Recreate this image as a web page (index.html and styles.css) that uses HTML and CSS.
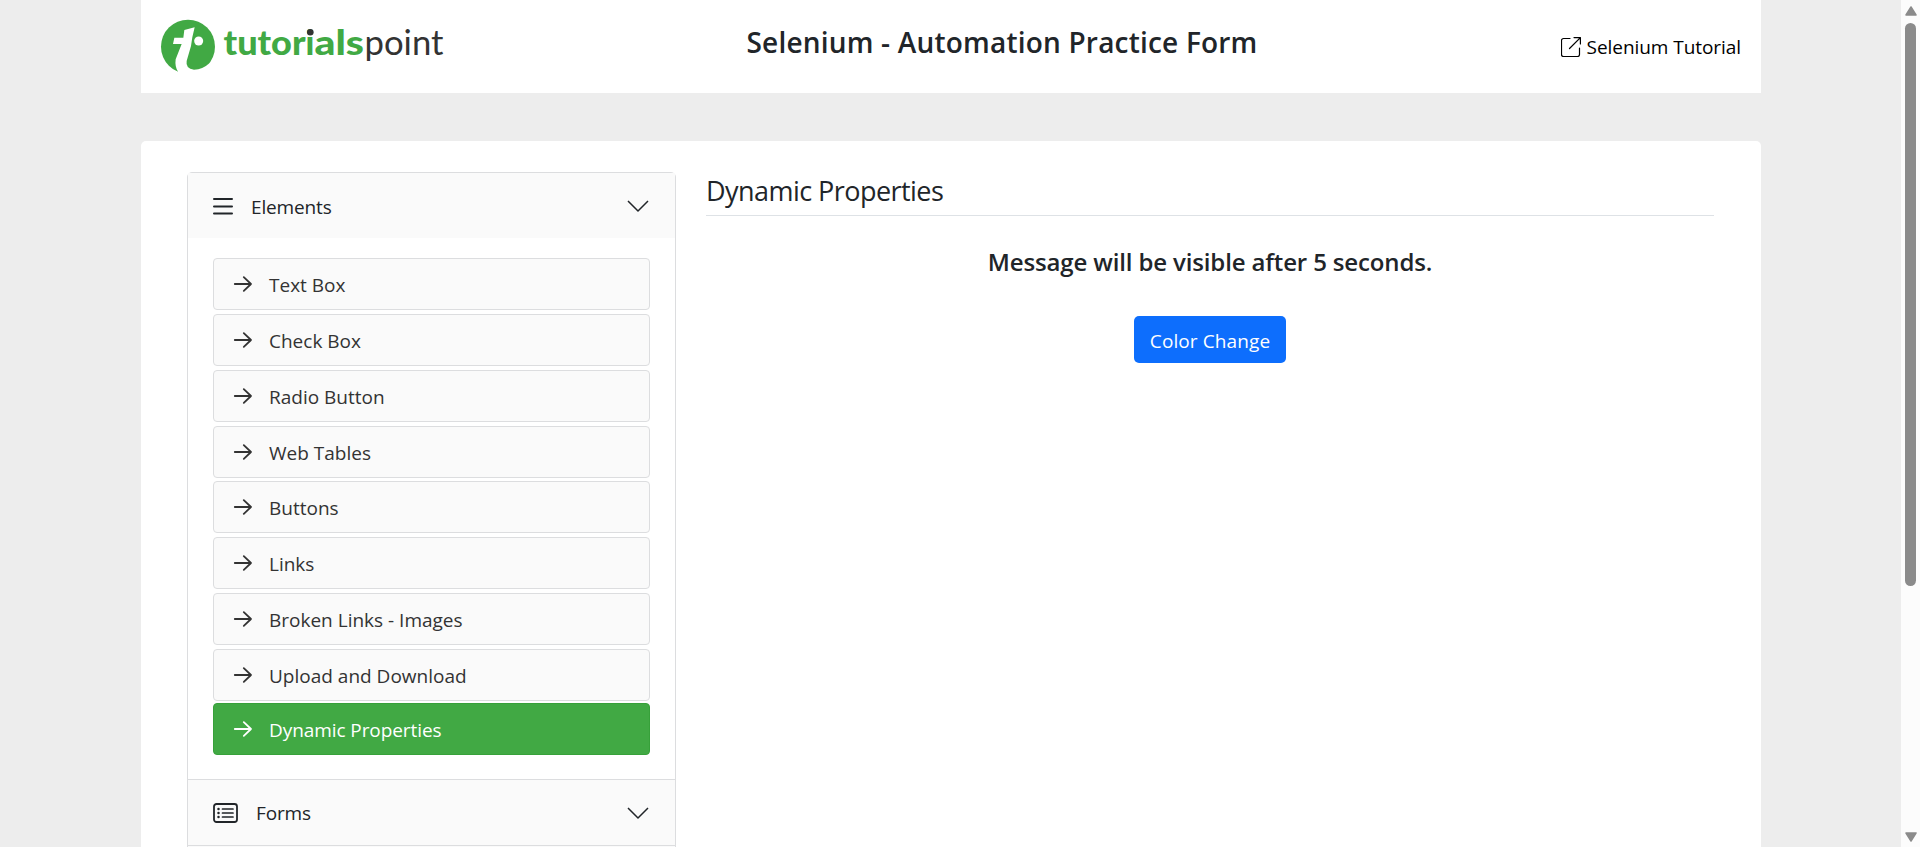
FILE: index.html
```html
<!DOCTYPE html>
<html lang="en">
<head>
<meta charset="utf-8">
<title>Selenium Practice - Dynamic Properties</title>
<link rel="stylesheet" href="styles.css">
</head>
<body>
<svg class="sprite" aria-hidden="true">
  <symbol id="arrow" viewBox="0 0 20 20"><path d="M1.800 10H18M10.800 3.200 18 10l-7.200 6.800" fill="none" stroke="currentColor" stroke-width="1.800" stroke-linecap="round" stroke-linejoin="round"/></symbol>
  <symbol id="chevron" viewBox="0 0 22 12"><path d="M1 1l10 10L21 1" fill="none" stroke="currentColor" stroke-width="1.500" stroke-linejoin="round"/></symbol>
</svg>
<div class="viewport">
  <div class="page">
    <header class="header">
      <svg class="logo" viewBox="0 0 290 60" role="img" aria-label="tutorialspoint">
        <g transform="translate(-3 -3) scale(.3333)">
          <circle cx="90" cy="92" r="81" fill="#41a944"/>
          <path d="M79 42 110 34 103 64 99 90 86 135Q82 158 108 161 135 160 152 143L150 190H62L60 167Q50 152 53 130L71 84H45L49 65H76Z" fill="#fff"/>
          <circle cx="122" cy="75" r="13.500" fill="#fff"/>
        </g>
        <text class="logo-bold" y="35.700"><tspan x="62.500" textLength="82" lengthAdjust="spacingAndGlyphs">tutor</tspan><tspan x="144.500">i</tspan><tspan x="153.500" textLength="49.500" lengthAdjust="spacingAndGlyphs">als</tspan></text>
        <circle cx="149.300" cy="13.200" r="3.300" fill="#333"/>
        <text class="logo-light" x="203.500" y="35.700" textLength="79" lengthAdjust="spacingAndGlyphs">point</text>
      </svg>
      <h1 class="title"><span>Selenium - Automation Practice Form</span></h1>
      <a class="tutorial"><svg class="external" viewBox="0 0 20 20"><path d="M9 1.500H2.500a2 2 0 0 0-2 2V17.500a2 2 0 0 0 2 2H16.500a2 2 0 0 0 2-2V11M13 .6H19.400V7M19.400.6 8.500 11.500" fill="none" stroke="#000" stroke-width="1.200" stroke-linecap="round" stroke-linejoin="round"/></svg><span>Selenium Tutorial</span></a>
    </header>
    <main class="card">
      <nav class="accordion">
        <div class="section-head">
          <svg class="icon-list" viewBox="0 0 20 18"><path d="M1 2H19M1 9.500H19M1 16.500H19" stroke="currentColor" stroke-width="2" stroke-linecap="round"/></svg>
          <span>Elements</span><svg class="chevron"><use href="#chevron"/></svg>
        </div>
        <ul class="links">
          <li class="link"><svg class="arrow"><use href="#arrow"/></svg><span>Text Box</span></li>
          <li class="link"><svg class="arrow"><use href="#arrow"/></svg><span>Check Box</span></li>
          <li class="link"><svg class="arrow"><use href="#arrow"/></svg><span>Radio Button</span></li>
          <li class="link"><svg class="arrow"><use href="#arrow"/></svg><span>Web Tables</span></li>
          <li class="link"><svg class="arrow"><use href="#arrow"/></svg><span>Buttons</span></li>
          <li class="link"><svg class="arrow"><use href="#arrow"/></svg><span>Links</span></li>
          <li class="link"><svg class="arrow"><use href="#arrow"/></svg><span>Broken Links - Images</span></li>
          <li class="link"><svg class="arrow"><use href="#arrow"/></svg><span>Upload and Download</span></li>
          <li class="link active"><svg class="arrow"><use href="#arrow"/></svg><span>Dynamic Properties</span></li>
        </ul>
        <div class="section-head bordered">
          <svg class="icon-form" viewBox="0 0 25 20"><rect x="1" y="1" width="23" height="18" rx="2.500" fill="none" stroke="currentColor" stroke-width="1.800"/><path d="M9.500 6H20M9.500 10H20M9.500 14H20" stroke="currentColor" stroke-width="1.700" stroke-linecap="round"/><path d="M5.500 6h.01M5.500 10h.01M5.500 14h.01" stroke="currentColor" stroke-width="2.500" stroke-linecap="round"/></svg>
          <span>Forms</span><svg class="chevron"><use href="#chevron"/></svg>
        </div>
        <div class="section-head bordered"></div>
      </nav>
      <section class="content">
        <h2 class="heading"><span>Dynamic Properties</span></h2>
        <p class="message"><span>Message will be visible after 5 seconds.</span></p>
        <button class="button" type="button"><span>Color Change</span></button>
      </section>
    </main>
  </div>
  <div class="scrollbar">
    <svg class="scroll-arrow" viewBox="0 0 12 10"><path d="M6 1 11 9H1Z" fill="#8b8b8b" stroke="#8b8b8b" stroke-width="1.500" stroke-linejoin="round"/></svg>
    <div class="thumb"></div>
    <svg class="scroll-arrow down" viewBox="0 0 12 10"><path d="M6 9 11 1H1Z" fill="#8b8b8b" stroke="#8b8b8b" stroke-width="1.500" stroke-linejoin="round"/></svg>
  </div>
</div>
</body>
</html>
```
FILE: styles.css
```css
* { box-sizing: border-box; }
body {
  margin: 0;
  overflow: hidden;
  background: #ededed;
  color: #212529;
  font-family: "Open Sans", "Noto Sans", sans-serif;
  font-size: 19px;
  line-height: 30px;
}
h1, h2, p, ul { margin: 0; padding: 0; }
.sprite { position: absolute; width: 0; height: 0; }
.viewport { display: flex; justify-content: space-between; height: 847px; overflow: hidden; }
.page { width: 1620px; margin-left: 141px; }
.header {
  display: grid;
  grid-template-columns: 387px 1fr 285px;
  height: 93px;
  padding: 0 20px;
  background: #fff;
}
.logo { width: 290px; height: 60px; margin-top: 19px; overflow: visible; }
.logo-bold { font: 900 34px Lato, sans-serif; fill: #41a944; }
.logo-light { font: 400 34px Lato, sans-serif; fill: #333; }
.title { margin-top: 24px; font-size: 28px; font-weight: 600; line-height: 36px; letter-spacing: 0.2px; text-align: center; }
.tutorial { display: flex; justify-content: flex-end; gap: 6px; height: 30px; margin-top: 32px; color: #000; letter-spacing: -0.06px; }
.external { width: 20px; height: 20px; margin-top: 5px; }
.card {
  display: flex;
  gap: 30px;
  height: 760px;
  margin-top: 48px;
  padding: 31px 47px 0 46px;
  border-radius: 5px;
  background: #fff;
}
.accordion { width: 489px; border: 1px solid #dcdddf; border-radius: 5px; }
.section-head {
  display: flex;
  align-items: center;
  height: 65px;
  padding: 0 26px 0 25px;
  background: #fafafa;
  letter-spacing: -0.15px;
}
.section-head span { margin-left: 18px; padding-top: 2px; }
.bordered { height: 66px; border-top: 1px solid #dcdddf; }
.bordered span { padding-top: 0; }
.icon-list { width: 20px; height: 18px; }
.icon-form { width: 25px; height: 20px; }
.chevron { width: 22px; height: 12px; margin-left: auto; }
.links { display: flex; flex-direction: column; padding: 20px 25px 24px; list-style: none; }
.link {
  display: flex;
  align-items: center;
  gap: 16px;
  height: 52px;
  margin-bottom: 3.87px;
  padding-left: 19px;
  border: 1px solid #dcdddf;
  border-radius: 4px;
  background: #fafafa;
  color: #333;
}
.link span { padding-top: 2px; }
.link:nth-child(8) { margin-bottom: 2px; }
.active { margin-bottom: 0; border-color: #37a13a; background: #41a944; color: #fff; letter-spacing: -0.08px; }
.arrow { width: 20px; height: 20px; }
.content { display: flex; flex: 1; flex-direction: column; align-items: center; }
.heading { width: 100%; height: 44px; border-bottom: 1px solid #dee2e6; font-size: 27px; font-weight: 400; line-height: 37px; letter-spacing: -0.55px; }
.message { margin-top: 31px; font-size: 24px; font-weight: 600; line-height: 30px; letter-spacing: -0.14px; }
.button {
  width: 152px;
  height: 47px;
  margin-top: 39px;
  padding: 2px 0 0;
  border: 0;
  border-radius: 5px;
  background: #0d6efd;
  color: #fff;
  font: 19px "Open Sans", "Noto Sans", sans-serif;
  letter-spacing: 0.1px;
}
.scrollbar { display: flex; flex-direction: column; align-items: center; width: 19px; padding: 6px 0 5px; background: #fcfcfc; }
.scroll-arrow { width: 12px; height: 10px; }
.thumb { width: 11px; height: 563px; margin-top: 7px; border-radius: 6px; background: #8b8b8b; }
.down { margin-top: auto; }
```
